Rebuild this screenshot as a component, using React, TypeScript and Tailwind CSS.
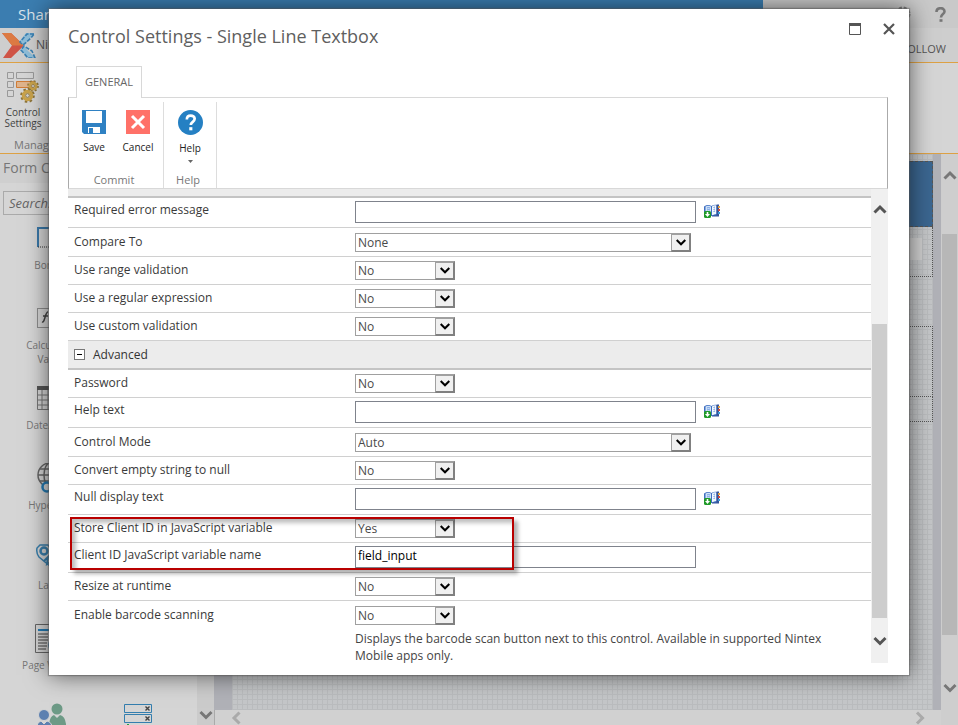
import type { ReactNode } from 'react';
import { useState } from 'react';

type FieldProps = { id: string; label: string };

function Chevron({ dir, className = '' }: { dir: 'up' | 'down' | 'left' | 'right'; className?: string }) {
  const paths = {
    up: 'M1.500 9.500L7 4L12.500 9.500',
    down: 'M1.500 4L7 9.500L12.500 4',
    left: 'M9.500 1.500L4 7L9.500 12.500',
    right: 'M4 1.500L9.500 7L4 12.500',
  };
  return (
    <svg viewBox="0 0 14 14" className={`h-[14px] w-[14px] shrink-0 ${className}`} fill="none" stroke="currentColor" strokeWidth="3">
      <path d={paths[dir]} />
    </svg>
  );
}

function BookIcon() {
  return (
    <svg viewBox="0 0 16 14" className="h-[14px] w-4" aria-hidden="true">
      <path d="M0 2.500Q4 0 7.500 2Q11 0 14 1.500V12H0z" fill="#3f6fc0" />
      <path d="M1.500 2.500Q4.500 .800 7 2.500V11.500Q4.500 10 1.500 11z" fill="#cfe1f8" />
      <path d="M8 2.500Q10 .800 12.500 1.500V10Q10 10 8 11.500z" fill="#f2f8ff" />
      <path d="M3 4q1.500-.800 3 0M3 6q1.500-.800 3 0M9.500 3.500l1.500-.500M9.500 5.500l1.500-.500M9.500 7.500l1.500-.500" stroke="#6c9be0" fill="none" />
      <path d="M12.500 .500H15V12.500H8V11.500h4.500z" fill="#35549a" />
      <path d="M14 2h2v2h-2z" fill="#e5a13c" />
      <path d="M14 5h2v2h-2z" fill="#d4483c" />
      <path d="M14 8h2v2h-2z" fill="#3d9bd8" />
      <rect x="0" y="7" width="7" height="7" rx="1.500" fill="#1f9a28" />
      <path d="M3.500 8v3" stroke="#fff" strokeWidth="1.600" />
      <path d="M1 10h5l-2.500 3z" fill="#fff" />
    </svg>
  );
}

function Row({ id, label, children, kind }: FieldProps & { children: ReactNode; kind: 'input' | 'select' | 'wide' | 'last' }) {
  const shape = {
    input: 'h-[30px] border-b pt-[3px]',
    select: 'h-7 border-b pt-1',
    wide: 'h-[29px] border-b pt-[5px]',
    last: 'pt-[5px]',
  }[kind];
  return (
    <div className={`flex items-start border-[#d0d0d0] pl-[6px] ${shape}`}>
      <label htmlFor={id} className="w-[281px] shrink-0 text-[12px] leading-[18px] text-[#3a3a3a]">{label}</label>
      {children}
    </div>
  );
}

function TextRow({ id, label, value = '', picker = true }: FieldProps & { value?: string; picker?: boolean }) {
  return (
    <Row id={id} label={label} kind="input">
      <input id={id} type="text" defaultValue={value} className="h-[22px] w-[341px] border border-[#7f838c] bg-white px-[2px] pb-[3px] text-[12px] text-black outline-none" />
      {picker && <button type="button" aria-label="Insert reference" className="ml-2 mt-[3px]"><BookIcon /></button>}
    </Row>
  );
}

function SelectBox({ id, value, options, width }: { id: string; value: string; options: string[]; width: string }) {
  return (
    <div className={`relative h-[19px] ${width}`}>
      <select id={id} defaultValue={value} className="block h-[19px] w-full appearance-none border border-[#a0a0a0] bg-white pl-[2px] pr-5 pt-px text-[12px] leading-4 text-[#4a4a4a] outline-none">
        {options.map((o) => <option key={o}>{o}</option>)}
      </select>
      <span className="pointer-events-none absolute inset-y-0 right-0 flex w-5 items-center justify-center border-2 border-l border-[#808080] border-l-[#a0a0a0] border-t-[#a0a0a0] bg-[#f0f0f0]">
        <svg viewBox="0 0 10 7" className="h-[7px] w-[10px]" fill="none" stroke="#000" strokeWidth="2"><path d="M0.700 1L5 5.300L9.300 1" /></svg>
      </span>
    </div>
  );
}

function SelectRow({ id, label, value = 'No' }: FieldProps & { value?: string }) {
  return <Row id={id} label={label} kind="select"><SelectBox id={id} value={value} options={['No', 'Yes']} width="w-[100px]" /></Row>;
}

function WideSelectRow({ id, label, value, options }: FieldProps & { value: string; options: string[] }) {
  return <Row id={id} label={label} kind="wide"><SelectBox id={id} value={value} options={options} width="w-[336px]" /></Row>;
}

function Tool({ label, children, arrow }: { label: string; children: ReactNode; arrow?: boolean }) {
  return (
    <button type="button" className="flex w-11 flex-col items-center text-[10px] leading-4 text-[#222]">
      {children}
      <span className="mt-[5px]">{label}</span>
      {arrow && <svg viewBox="0 0 5 3" className="mt-1 h-[3px] w-[5px]"><path d="M0 0h5L2.500 3z" fill="#666" /></svg>}
    </button>
  );
}

function Modal() {
  const [open, setOpen] = useState(true);
  return (
    <section role="dialog" aria-label="Control Settings" className="absolute bottom-[50px] left-[49px] right-[49px] top-[9px] flex flex-col bg-white pb-3 pl-[19px] pr-[21px] shadow-[0_0_22px_rgba(0,0,0,0.600),0_0_1px_1px_rgba(120,120,120,0.500)]">
      <header className="flex h-[57px] items-start justify-between">
        <h1 className="mt-[13px] text-[18px] leading-7 text-[#5f5f5f]">Control Settings - Single Line Textbox</h1>
        <div className="mt-[14px] flex gap-[22px]">
          <button type="button" aria-label="Maximize"><svg viewBox="0 0 12 12" className="h-3 w-3"><path d="M.500 1v10.500h11V1" fill="none" stroke="#555" /><path d="M0 0h12v3H0z" fill="#555" /></svg></button>
          <button type="button" aria-label="Close" className="mr-[-7px]"><svg viewBox="0 0 12 12" className="h-3 w-3" stroke="#555" strokeWidth="2.200"><path d="M1 1l10 10M11 1L1 11" /></svg></button>
        </div>
      </header>
      <div className="relative z-10 -mb-px ml-2 flex">
        <button type="button" className="h-8 w-[66px] border border-b-0 border-[#d8d8d8] bg-white text-[11px] text-[#666]">GENERAL</button>
      </div>
      <div className="flex h-[92px] shrink-0 border border-x-[#aaa] border-y-[#d8d8d8] pt-1">
        <div className="flex w-[95px] flex-col justify-between border-r border-[#ddd]">
          <div className="flex pl-[3px] pt-2">
            <Tool label="Save">
              <svg viewBox="0 0 24 24" className="h-6 w-6"><path d="M0 0h24v24H2L0 22z" fill="#2f81c3" /><path d="M4 1h16v12H4zM6 17h12v6H6z" fill="#fff" /><path d="M7 18h4v5H7z" fill="#2f81c3" /></svg>
            </Tool>
            <Tool label="Cancel">
              <svg viewBox="0 0 24 24" className="h-6 w-6"><rect width="24" height="24" fill="#ff7168" /><path d="M6 6l12 12M18 6L6 18" stroke="#fff" strokeWidth="3" /></svg>
            </Tool>
          </div>
          <span className="pr-1 text-center text-[11px] leading-4 text-[#777]">Commit</span>
        </div>
        <div className="flex w-[53px] flex-col items-center justify-between border-r border-[#ddd]">
          <div className="pt-2">
            <Tool label="Help" arrow>
              <svg viewBox="0 0 24 24" className="h-[25px] w-[25px]"><circle cx="12" cy="12" r="12" fill="#2580c3" /><path d="M8.500 9c0-5 7.500-4.500 7.500-.500 0 3-3.700 2.700-3.700 6" stroke="#fff" strokeWidth="2.600" fill="none" /><rect x="10.800" y="16.500" width="3" height="3" fill="#fff" /></svg>
            </Tool>
          </div>
          <span className="pr-1 text-[11px] leading-4 text-[#777]">Help</span>
        </div>
      </div>
      <div className="flex min-h-0 flex-1 overflow-hidden">
        <form className="relative min-w-0 flex-1">
          <div className="h-[9px] border-b-2 border-[#c4c4c4] bg-[#ececec]" />
          <TextRow id="required" label="Required error message" />
          <WideSelectRow id="compare" label="Compare To" value="None" options={['None', 'Value', 'Control']} />
          <SelectRow id="range" label="Use range validation" />
          <SelectRow id="regex" label="Use a regular expression" />
          <SelectRow id="custom" label="Use custom validation" />
          <div className="flex h-[29px] items-center gap-2 border-b-2 border-[#c4c4c4] bg-[#ececec] pl-[6px] text-[12px] text-[#333]">
            <button type="button" aria-label="Collapse Advanced" className="flex h-[11px] w-[11px] items-center justify-center border border-[#777] bg-white" onClick={() => setOpen(!open)}><span className="h-px w-[5px] bg-black" /></button>
            <h2 className="pt-px">Advanced</h2>
          </div>
          {open && (
            <>
              <SelectRow id="password" label="Password" />
              <TextRow id="helptext" label="Help text" />
              <WideSelectRow id="mode" label="Control Mode" value="Auto" options={['Auto', 'View', 'Edit']} />
              <SelectRow id="convert" label="Convert empty string to null" />
              <TextRow id="nulltext" label="Null display text" />
              <div className="relative">
                <SelectRow id="store" label="Store Client ID in JavaScript variable" value="Yes" />
                <TextRow id="clientid" label="Client ID JavaScript variable name" value="field_input" picker={false} />
                <div className="pointer-events-none absolute bottom-[3px] left-[2px] top-[2px] w-[444px] border-2 border-[#b90000] shadow-[4px_4px_4px_rgba(0,0,0,0.300),inset_4px_4px_4px_rgba(0,0,0,0.250)]" />
              </div>
              <SelectRow id="resize" label="Resize at runtime" />
              <Row id="barcode" label="Enable barcode scanning" kind="last">
                <div>
                  <SelectBox id="barcode" value="No" options={['No', 'Yes']} width="w-[100px]" />
                  <p className="mt-[5px] w-[490px] text-[12px] leading-[17px] text-[#444]">Displays the barcode scan button next to this control. Available in supported Nintex Mobile apps only.</p>
                </div>
              </Row>
            </>
          )}
        </form>
        <div className="flex w-[17px] flex-col items-center bg-[#f0f0f0] pb-[15px] pt-[14px] text-[#555]">
          <Chevron dir="up" />
          <div className="mt-[107px] w-[15px] flex-1 bg-[#cdcdcd]" />
          <Chevron dir="down" className="mt-4" />
        </div>
      </div>
    </section>
  );
}

function PaletteItem({ name, label, children }: { name: string; label?: string; children: ReactNode }) {
  return (
    <button type="button" aria-label={name} className="flex h-20 flex-col items-center text-[10px] leading-[14px] text-[#777]">
      <span className="flex h-8 items-center">{children}</span>
      {label && <span className="mt-1 w-16">{label}</span>}
    </button>
  );
}

function Palette() {
  return (
    <aside className="flex w-[214px] shrink-0 overflow-hidden bg-[#d5d5d5]">
      <div className="flex-1">
        <h2 className="h-[29px] bg-[#cfcfcf] pl-[3px] text-[14px] leading-7 text-[#777]">Form Controls</h2>
        <div className="pl-[3px] pt-[7px]">
          <input type="search" aria-label="Search" placeholder="Search..." className="h-6 w-[180px] border border-[#aaa] bg-transparent px-[5px] text-[13px] italic placeholder:text-[#666]" />
        </div>
        <div className="grid grid-cols-[87px_87px] pl-[7px] pt-[7px]">
          <PaletteItem name="Border" label="Border"><svg viewBox="0 0 28 22" className="h-[22px] w-7"><path d="M1 20V1h27" stroke="#3a78a8" strokeWidth="2" fill="none" /><path d="M1 20h27" stroke="#333" strokeDasharray="1 1" /></svg></PaletteItem>
          <span />
          <PaletteItem name="Calculated Value" label="Calculated Value"><svg viewBox="0 0 28 20" className="h-5 w-7" fill="none" stroke="#444"><path d="M.500 .500h27v19H.500z" strokeDasharray="1 1" /><path d="M5 14c3 1 3-10 6-10M6 8h5" strokeWidth="1.500" /></svg></PaletteItem>
          <span />
          <PaletteItem name="Date/Time" label="Date/Time"><svg viewBox="0 0 28 24" className="h-6 w-7" fill="none" stroke="#777"><path d="M.500 .500h27v23H.500zM0 9h28M0 14h28M0 19h28M5 4v20M11 4v20M17 4v20" /><path d="M0 2h28" stroke="#555" strokeWidth="4" /></svg></PaletteItem>
          <span />
          <PaletteItem name="Hyperlink" label="Hyperlink"><svg viewBox="0 0 30 30" className="h-[30px] w-[30px]" fill="none" stroke="#666" strokeWidth="1.500"><circle cx="14" cy="12" r="12" /><ellipse cx="14" cy="12" rx="6" ry="12" /><path d="M2 12h24M4 6h20M4 18h20M14 0v24" /><circle cx="11" cy="24" r="4.500" stroke="#267bb3" strokeWidth="2.500" fill="#d5d5d5" /></svg></PaletteItem>
          <span />
          <PaletteItem name="Label" label="Label"><svg viewBox="0 0 30 28" className="h-7 w-[30px]" fill="none" stroke="#397fac" strokeWidth="1.500"><path d="M4 1h8l16 20-8 6L3 13Q0 9 1 4z" /><circle cx="8" cy="7" r="3.500" strokeWidth="2.500" /><path d="M8 17l4-4-1 7 5-3" strokeWidth="2" /></svg></PaletteItem>
          <span />
          <PaletteItem name="Page Viewer" label="Page Viewer"><svg viewBox="0 0 32 29" className="h-[29px] w-8" fill="none"><path d="M.500 .500h31v28H.500z" stroke="#666" /><path d="M3 6h26" stroke="#257bb3" strokeWidth="2" /><path d="M3 10h10M3 13h10M3 16h10M3 19h9M3 22h9M3 25h8" stroke="#444" /><circle cx="20" cy="21" r="7" fill="#4687b4" /></svg></PaletteItem>
          <span />
          <PaletteItem name="People Picker"><svg viewBox="0 0 30 32" className="h-8 w-[30px]"><circle cx="21" cy="7" r="5.500" fill="#6d9a86" /><path d="M13 22q1-8 5-9l3 3 3-3q5 1 6 9v10H13z" fill="#6d9a86" /><circle cx="8" cy="13" r="5.500" fill="#5d80b0" stroke="#d5d5d5" strokeWidth="1" /><path d="M0 28q1-8 5-9l3 3 3-3q5 1 6 9v4H0z" fill="#5d80b0" stroke="#d5d5d5" /></svg></PaletteItem>
          <PaletteItem name="Repeating Section"><svg viewBox="0 0 28 32" className="h-8 w-7" fill="none" stroke="#347eae"><path d="M.500 2.500h27v8H.500zM.500 12.500h27v8H.500z" /><path d="M21.500 4.500l4 4M25.500 4.500l-4 4M21.500 14.500l4 4M25.500 14.500l-4 4" stroke="#444" strokeWidth="1.400" /><path d="M4 22v8" stroke="#25a145" strokeWidth="2" /></svg></PaletteItem>
        </div>
      </div>
      <div className="flex w-[17px] flex-col items-center justify-end bg-[#cbcbcb] pb-[3px] text-[#777]"><Chevron dir="down" /></div>
    </aside>
  );
}

function Canvas() {
  return (
    <div className="flex min-w-0 flex-1 bg-[#cecece]">
      <main className="flex min-w-0 flex-1 flex-col">
        <div className="flex min-h-0 flex-1 bg-[#b0b1b7] pl-[18px] pr-2">
          <div className="flex-1 bg-[#c4c6c8] bg-[linear-gradient(#babcbe_1px,transparent_1px),linear-gradient(90deg,#babcbe_1px,transparent_1px)] bg-[size:5px_5px] pt-[7px]">
            <div className="h-[66px] border border-dashed border-[#555] bg-[#3b6690]" />
            <div className="h-[50px] border-b border-r border-dotted border-[#555] pr-[10px] pt-[11px]"><div className="h-[22px] bg-[#d0d0d0]" /></div>
            <div className="mt-[49px] h-[71px] border border-dotted border-[#555]" />
            <div className="h-[25px] border-b border-r border-dotted border-[#555]" />
          </div>
        </div>
        <div className="flex h-[15px] items-center justify-between border-l border-[#aaa] bg-[#d1d1d1] pl-[15px] pr-[14px] text-[#aaa]"><Chevron dir="left" /><Chevron dir="right" /></div>
      </main>
      <div className="flex w-[17px] flex-col items-center pb-[30px] pt-[15px] text-[#777]">
        <Chevron dir="up" />
        <div className="mt-[51px] w-[15px] flex-1 bg-[#b7b7b7]" />
        <Chevron dir="down" className="mt-[46px]" />
      </div>
    </div>
  );
}

function Gear({ className }: { className: string }) {
  return <svg viewBox="0 0 16 16" className={className}><circle cx="8" cy="8" r="6.300" fill="none" stroke="#8d743a" strokeWidth="3" strokeDasharray="2.500 2.450" /><circle cx="8" cy="8" r="4.300" fill="none" stroke="#c8a24b" strokeWidth="3.600" /><circle cx="8" cy="8" r="2" fill="#d3d3d3" stroke="#8d743a" /></svg>;
}

export default function App() {
  return (
    <div className="relative flex h-screen flex-col overflow-hidden bg-[#d3d3d3] font-['Open_Sans','Noto_Sans',sans-serif]">
      <div className="flex h-7 shrink-0 bg-[#c9c9c9]">
        <div className="flex-1 bg-[#3b7db0] pl-[18px] text-[15px] leading-7 text-[#dce5ec]">SharePoint</div>
        <div className="flex w-[195px] items-center justify-end gap-6 pr-3 text-[#777]">
          <svg viewBox="0 0 16 16" className="h-4 w-4"><circle cx="8" cy="8" r="6" fill="none" stroke="currentColor" strokeWidth="3" strokeDasharray="3 1.700" /></svg>
          <svg viewBox="0 0 11 15" className="h-[15px] w-[11px]" fill="none" stroke="currentColor"><path d="M1.500 5c0-5 8-5 8-.500C9.500 7 6 7 6 10.500" strokeWidth="2.600" /><path d="M4.500 13.500h3" strokeWidth="2.600" /></svg>
        </div>
      </div>
      <div className="flex h-[35px] shrink-0 items-center justify-between border-b border-[#dda144] bg-[#cecece] pr-3 text-[#555]">
        <div className="flex items-center pl-[2px] text-[12px]">
          <svg viewBox="0 0 34 25" className="h-[25px] w-[34px]">
            <path d="M0 0h9l13 12.500L9 25H1l9-12.500z" fill="#cf5446" />
            <path d="M0 0h9l13 12.500H10z" fill="#dc7a43" />
            <path d="M32 0h-8l-6 8 4 5 4 5 8 7h-8l-7-8 3-4z" fill="#8fbdd8" />
            <path d="M32 1h-7l-7 8 3 3 8-7zM33 25l-3-7-8-5-3 4 7 8z" fill="none" stroke="#3a80b2" strokeWidth="1.600" strokeDasharray="4 1.500" />
          </svg>
          <span>Nintex</span>
        </div>
        <button type="button" className="mt-2 text-[11px]">FOLLOW</button>
      </div>
      <div className="flex h-[91px] shrink-0 border-b border-[#dda144] bg-[#d5d5d5]">
        <div className="flex w-[90px] flex-col justify-between pt-2">
          <button type="button" className="w-[46px] text-[10px] leading-[11px] text-[#444]">
            <span className="relative ml-[7px] block h-8 w-8">
              <svg viewBox="0 0 32 32" className="h-8 w-8" fill="none" stroke="#999"><path d="M.500 1.500h6v6h-6zM9.500 1.500h17v6h-17zM.500 10.500h6v6h-6zM.500 19.500h6v6h-6z" /><path d="M9.500 10.500h17v6h-17z" fill="#dfb38b" stroke="#d07c36" /></svg>
              <Gear className="absolute left-[20px] top-[9px] h-3 w-3" />
              <Gear className="absolute left-[13px] top-[17px] h-[15px] w-[15px]" />
            </span>
            <span className="mt-1 block">Control Settings</span>
          </button>
          <span className="pl-[14px] text-[11px] leading-4 text-[#777]">Manage</span>
        </div>
      </div>
      <div className="flex min-h-0 flex-1"><Palette /><Canvas /></div>
      <Modal />
    </div>
  );
}
